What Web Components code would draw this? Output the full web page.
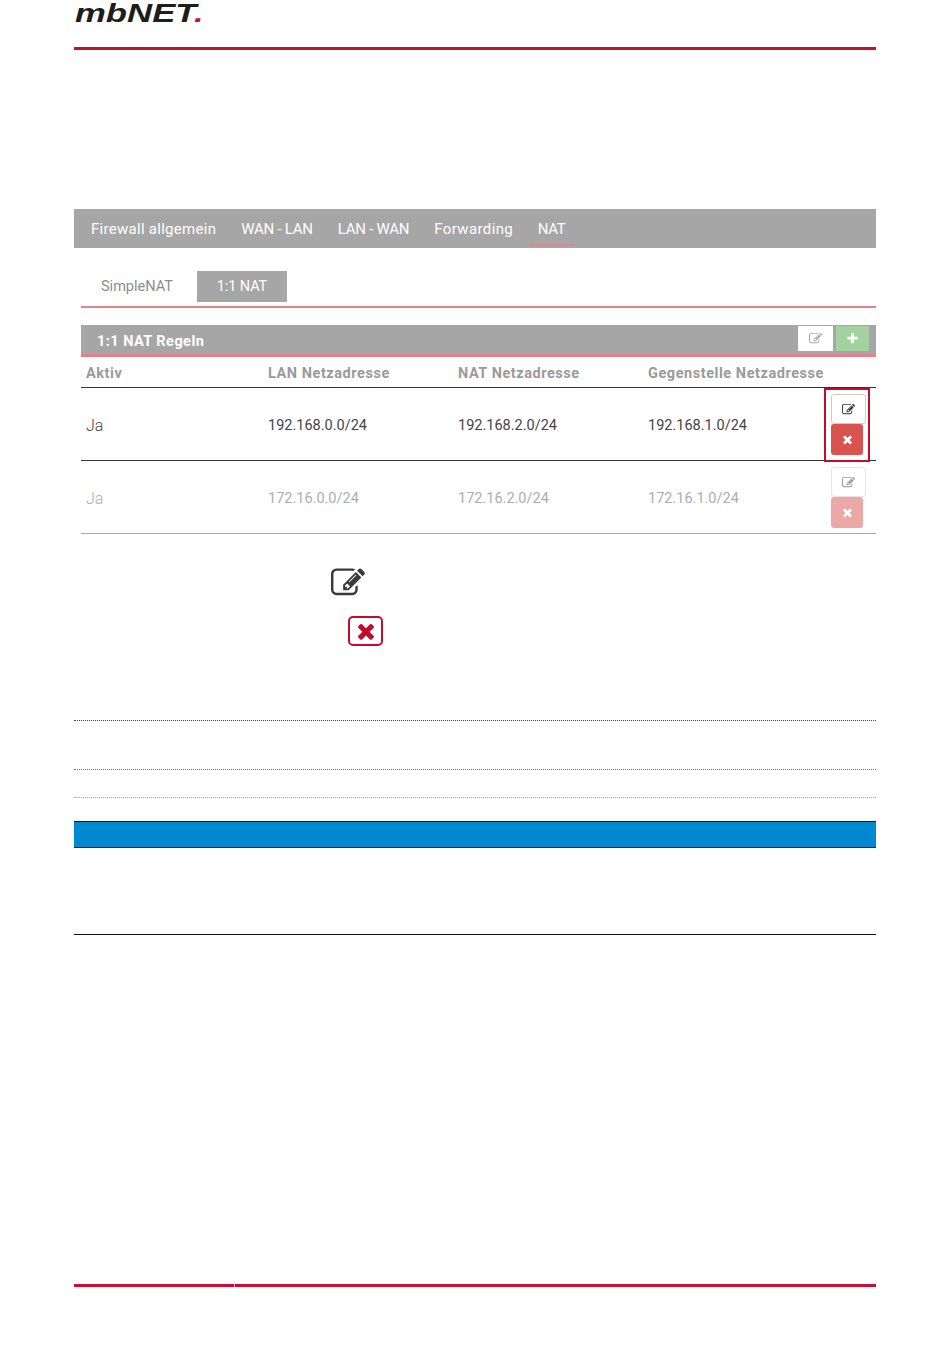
<!DOCTYPE html>
<html lang="de">
<head>
<meta charset="utf-8">
<title>mbNET NAT</title>
<style>
  html, body { margin: 0; background: #fff; }
  body { font-family: Roboto, "Liberation Sans", sans-serif; width: 950px; height: 1360px; overflow: hidden; }
</style>
</head>
<body>
<manual-page>
  <manual-header></manual-header>
  <main-tabs active="NAT">
    <span>Firewall allgemein</span><span>WAN - LAN</span><span>LAN - WAN</span><span>Forwarding</span><span>NAT</span>
  </main-tabs>
  <sub-tabs></sub-tabs>
  <nat-panel title="1:1 NAT Regeln">
    <nat-row aktiv="Ja" lan="192.168.0.0/24" nat="192.168.2.0/24" peer="192.168.1.0/24" marked></nat-row>
    <nat-row aktiv="Ja" lan="172.16.0.0/24" nat="172.16.2.0/24" peer="172.16.1.0/24" disabled></nat-row>
  </nat-panel>
  <icon-legend></icon-legend>
  <doc-rules></doc-rules>
  <note-table></note-table>
  <manual-footer></manual-footer>
</manual-page>

<script>
const ICONS = {
  edit: 'M888 1184l116-116-152-152-116 116v56h96v96h56zm440-720q-16-16-33 1l-350 350q-17 17-1 33t33-1l350-350q17-17 1-33zm80 594v190q0 119-84.5 203.5t-203.5 84.5h-832q-119 0-203.5-84.5t-84.5-203.5v-832q0-119 84.5-203.5t203.5-84.5h832q63 0 117 25 15 7 18 23 3 17-9 29l-49 49q-14 14-32 8-23-6-45-6h-832q-66 0-113 47t-47 113v832q0 66 47 113t113 47h832q66 0 113-47t47-113v-126q0-13 9-22l64-64q15-15 35-7t20 29zm-96-738l288 288-672 672h-288v-288zm444 132l-92 92-288-288 92-92q28-28 68-28t68 28l152 152q28 28 28 68t-28 68z',
  times: 'M1490 1322q0 40-28 68l-136 136q-28 28-68 28t-68-28l-294-294-294 294q-28 28-68 28t-68-28l-136-136q-28-28-28-68t28-68l294-294-294-294q-28-28-28-68t28-68l136-136q28-28 68-28t68 28l294 294 294-294q28-28 68-28t68 28l136 136q28 28 28 68t-28 68l-294 294 294 294q28 28 28 68z',
  plus: 'M1600 736v192q0 40-28 68t-68 28h-416v416q0 40-28 68t-68 28h-192q-40 0-68-28t-28-68v-416h-416q-40 0-68-28t-28-68v-192q0-40 28-68t68-28h416v-416q0-40 28-68t68-28h192q40 0 68 28t28 68v416h416q40 0 68 28t28 68z'
};

class MbIcon extends HTMLElement {
  constructor(){
    super();
    this.attachShadow({mode: 'open'});
  }

  connectedCallback(){
    const size = this.getAttribute('size') || 14;
    this.shadowRoot.innerHTML = /* html */ `
    <style>:host{ display: inline-flex; } svg{ display: block; fill: currentColor; }</style>
    <svg width="${size}" height="${size}" viewBox="0 0 1792 1792"><path d="${ICONS[this.getAttribute('name')]}"/></svg>
    `
  }
}

class ManualPage extends HTMLElement {
  constructor(){
    super();
    this.attachShadow({mode: 'open'});
    this.shadowRoot.innerHTML = /* html */ `
    <style>
      :host{
        display: flex;
        flex-direction: column;
        width: 802px;
        margin-inline-start: 74px;
      }
    </style>
    <slot></slot>
    `
  }
}

class ManualHeader extends HTMLElement {
  constructor(){
    super();
    this.attachShadow({mode: 'open'});
    this.shadowRoot.innerHTML = /* html */ `
    <style>
      :host{
        display: block;
        height: 50px;
        box-sizing: border-box;
        border-bottom: 3px solid #c8102e;
        margin-block-end: 159px;
        padding-block-start: 1px;
      }
      .logo {
        display: block;
        width: 102px;
        margin-inline-start: 1px;
        font: italic 700 26.5px/24px "Liberation Sans", sans-serif;
        color: #1d1d1b;
        white-space: nowrap;
        transform-origin: 0 0;
        transform: scaleX(1.31);
      }
      .logo i { color: #c8102e; }
    </style>
    <span class="logo">mbNET<i>.</i></span>
    `
  }
}

class MainTabs extends HTMLElement {
  constructor(){
    super();
    this.attachShadow({mode: 'open'});
    this.shadowRoot.innerHTML = /* html */ `
    <style>
      :host{
        display: block;
        height: 39px;
        background: #a6a6a6;
        padding-inline-start: 17px;
        margin-block-end: 23px;
      }
      .bar {
        display: flex;
        gap: 25px;
        height: 100%;
        align-items: center;
        color: #fff;
        font-size: 15px;
      }
      ::slotted(span:nth-child(1)) { letter-spacing: .28px; }
      ::slotted(span:nth-child(2)), ::slotted(span:nth-child(3)) { letter-spacing: -.25px; }
      ::slotted(span:nth-child(4)) { letter-spacing: .38px; }
      ::slotted(span:last-child) {
        align-self: flex-start;
        display: flex;
        align-items: center;
        box-sizing: border-box;
        height: 37px;
        padding: 4px 9px 0;
        margin-inline-start: -9.5px;
        letter-spacing: -.3px;
        border-bottom: 2px solid #e8808a;
      }
    </style>
    <div class="bar"><slot></slot></div>
    `
  }
}

class SubTabs extends HTMLElement {
  constructor(){
    super();
    this.attachShadow({mode: 'open'});
    this.shadowRoot.innerHTML = /* html */ `
    <style>
      :host{
        display: flex;
        height: 31px;
        padding-block-end: 4px;
        margin-inline-start: 7px;
        border-bottom: 2px solid #e8808a;
        margin-block-end: 17px;
        font-size: 14.5px;
      }
      div {
        width: 90px;
        text-align: center;
        line-height: 32px;
      }
      .off { width: 96px; padding-inline-start: 20px; text-align: left; color: #8c8c8c; }
      .on { background: #a6a6a6; color: #fff; letter-spacing: -.1px; }
    </style>
    <div class="off">SimpleNAT</div><div class="on">1:1 NAT</div>
    `
  }
}

class NatPanel extends HTMLElement {
  constructor(){
    super();
    this.attachShadow({mode: 'open'});
  }

  connectedCallback(){
    this.shadowRoot.innerHTML = /* html */ `
    <style>
      :host{
        display: block;
        margin-inline-start: 7px;
      }
      .head {
        display: flex;
        align-items: center;
        justify-content: space-between;
        box-sizing: border-box;
        height: 32px;
        background: #a6a6a6;
        border-bottom: 3px solid #e8808a;
        padding-inline: 16px 7px;
        color: #fff;
        font-weight: 700;
        font-size: 14.5px;
        letter-spacing: .45px;
      }
      .head > span { margin-block-start: 4px; }
      .tools { display: flex; gap: 3px; margin-block-start: -2px; }
      .tools span {
        display: flex;
        align-items: center;
        justify-content: center;
        width: 35px;
        height: 25px;
        background: #fff;
        color: #aaa;
      }
      .tools span + span { width: 33px; background: #a3d2a0; color: #fff; }
      .cols {
        display: grid;
        grid-template-columns: 182px 190px 190px 1fr;
        box-sizing: border-box;
        height: 31px;
        padding-block-start: 2px;
        align-items: center;
        padding-inline-start: 5px;
        font-weight: 700;
        font-size: 14.5px;
        letter-spacing: .55px;
        color: #9a9a9a;
        border-bottom: 1px solid #333;
        white-space: nowrap;
      }
    </style>
    <div class="head">
      <span>${this.getAttribute('title')}</span>
      <div class="tools"><span><mb-icon name="edit" size="13"></mb-icon></span><span><mb-icon name="plus" size="13"></mb-icon></span></div>
    </div>
    <div class="cols"><span>Aktiv</span><span>LAN Netzadresse</span><span>NAT Netzadresse</span><span>Gegenstelle Netzadresse</span></div>
    <slot></slot>
    `
  }
}

class NatRow extends HTMLElement {
  constructor(){
    super();
    this.attachShadow({mode: 'open'});
  }

  connectedCallback(){
    const get = n => this.getAttribute(n);
    this.shadowRoot.innerHTML = /* html */ `
    <style>
      :host{
        display: grid;
        grid-template-columns: 182px 190px 190px 1fr;
        position: relative;
        height: 73px;
        box-sizing: border-box;
        align-items: center;
        padding-inline-start: 5px;
        padding-block-start: 3px;
        font-size: 14.5px;
        color: #444;
        border-bottom: 1px solid #333;
      }
      :host([disabled]) {
        color: #adadad;
        border-bottom-color: #aaa;
      }
      .aktiv { font-size: 16px; font-weight: 300; }
      .btns {
        position: absolute;
        left: 750px;
        top: 6px;
        display: flex;
        flex-direction: column;
      }
      .edit, .del {
        display: flex;
        align-items: center;
        justify-content: center;
        box-sizing: border-box;
        border-radius: 3px;
      }
      .edit { width: 35px; height: 30px; background: #fff; border: 1px solid #ccc; color: #333; }
      .del { width: 32px; height: 31px; background: #d9534f; color: #fff; }
      :host([disabled]) .btns { opacity: .5; }
      .frame {
        position: absolute;
        left: 743px;
        top: 0;
        width: 46px;
        height: 74px;
        box-sizing: border-box;
        border: 2px solid #c00d2d;
      }
    </style>
    <span class="aktiv">${get('aktiv')}</span><span>${get('lan')}</span><span>${get('nat')}</span><span>${get('peer')}</span>
    <div class="btns">
      <div class="edit"><mb-icon name="edit" size="13"></mb-icon></div>
      <div class="del"><mb-icon name="times" size="13"></mb-icon></div>
    </div>
    ${this.hasAttribute('marked') ? '<div class="frame"></div>' : ''}
    `
  }
}

class IconLegend extends HTMLElement {
  constructor(){
    super();
    this.attachShadow({mode: 'open'});
    this.shadowRoot.innerHTML = /* html */ `
    <style>
      :host{
        display: flex;
        flex-direction: column;
        padding-block-start: 32px;
        height: 186px;
        box-sizing: border-box;
      }
      .edit { margin-inline-start: 257px; color: #3a3a3a; height: 50px; }
      .del {
        margin-inline-start: 274px;
        width: 35px;
        height: 30px;
        box-sizing: border-box;
        display: flex;
        align-items: center;
        justify-content: center;
        border: 2px solid #c00d2d;
        border-radius: 5px;
        color: #c00d2d;
      }
    </style>
    <div class="edit"><mb-icon name="edit" size="34"></mb-icon></div>
    <div class="del"><mb-icon name="times" size="24"></mb-icon></div>
    `
  }
}

class DocRules extends HTMLElement {
  constructor(){
    super();
    this.attachShadow({mode: 'open'});
    this.shadowRoot.innerHTML = /* html */ `
    <style>
      :host{ display: block; }
      div { border-top: 1px dotted #444; }
      .a { height: 48px; }
      .b { height: 27px; border-top-color: #777; }
      .c { height: 23px; border-top-color: #aaa; }
    </style>
    <div class="a"></div><div class="b"></div><div class="c"></div>
    `
  }
}

class NoteTable extends HTMLElement {
  constructor(){
    super();
    this.attachShadow({mode: 'open'});
    this.shadowRoot.innerHTML = /* html */ `
    <style>
      :host{
        display: block;
        height: 113px;
        border-bottom: 1px solid #111;
      }
      div {
        height: 25px;
        background: #0089cf;
        border-block: 1px solid #0a1a2a;
      }
    </style>
    <div></div>
    `
  }
}

class ManualFooter extends HTMLElement {
  constructor(){
    super();
    this.attachShadow({mode: 'open'});
    this.shadowRoot.innerHTML = /* html */ `
    <style>
      :host{
        display: block;
        height: 3px;
        margin-block-start: 349px;
        background: linear-gradient(90deg, #c8102e 160px, #e9a0ac 160px, #e9a0ac 161px, #c8102e 161px);
      }
    </style>
    `
  }
}

customElements.define('mb-icon', MbIcon);
customElements.define('manual-page', ManualPage);
customElements.define('manual-header', ManualHeader);
customElements.define('main-tabs', MainTabs);
customElements.define('sub-tabs', SubTabs);
customElements.define('nat-panel', NatPanel);
customElements.define('nat-row', NatRow);
customElements.define('icon-legend', IconLegend);
customElements.define('doc-rules', DocRules);
customElements.define('note-table', NoteTable);
customElements.define('manual-footer', ManualFooter);
</script>
</body>
</html>
